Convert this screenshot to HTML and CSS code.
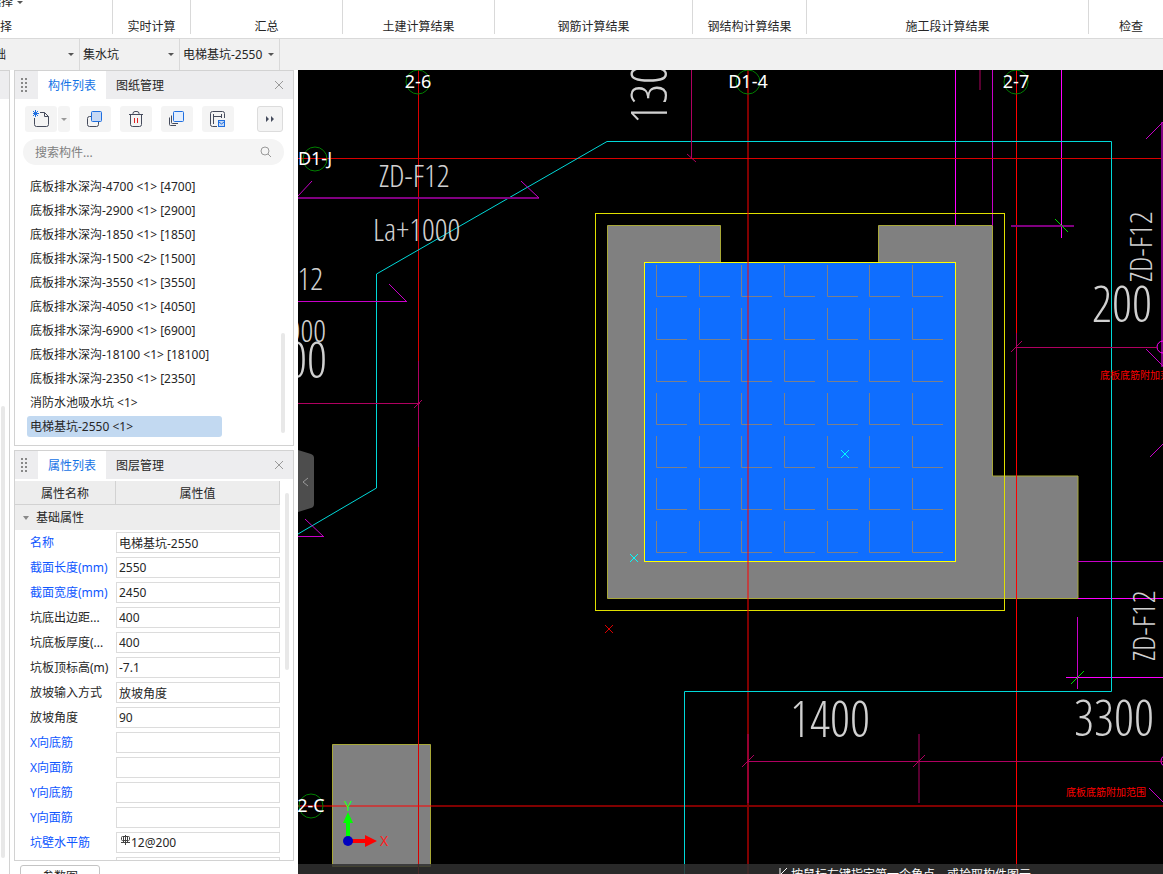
FILE: index.html
```html
<!DOCTYPE html>
<html lang="zh-CN">
  <head>
    <meta charset="UTF-8" />
    <meta name="viewport" content="width=device-width, initial-scale=1.0" />
    <title>集水坑 - 电梯基坑-2550</title>
    <link rel="stylesheet" href="styles.css">
  </head>
  <body>
    <header class="ribbon">
      <div class="group group-select"><button class="drop-btn">选择</button><span>选择</span></div>
      <div class="group group-live"><span>实时计算</span></div>
      <div class="group group-sum"><span>汇总</span></div>
      <div class="group group-sum"><span>土建计算结果</span></div>
      <div class="group group-rebar"><span>钢筋计算结果</span></div>
      <div class="group group-steel"><span>钢结构计算结果</span></div>
      <div class="group group-stage"><span>施工段计算结果</span></div>
      <div class="group group-check"><span>检查</span></div>
    </header>

    <nav class="selectors">
      <div class="selector"><select aria-label="构件大类"><option>基础</option></select></div>
      <div class="selector"><select aria-label="构件类型"><option>集水坑</option></select></div>
      <div class="selector"><select aria-label="构件"><option>电梯基坑-2550</option></select></div>
    </nav>

    <div class="workspace">
      <div class="nav-strip">
        <div class="strip-head"></div>
        <div class="strip-thumb"></div>
      </div>

      <aside class="sidebar">
        <section class="panel">
          <div class="tabs">
            <span class="grip"></span>
            <button class="tab active">构件列表</button>
            <button class="tab">图纸管理</button>
            <button class="close" aria-label="关闭">
              <svg width="10" height="10" viewBox="0 0 10 10"><path d="M1 1l8 8M9 1l-8 8" /></svg>
            </button>
          </div>
          <div class="toolbar">
            <div class="split">
              <button class="tool" aria-label="新建">
                <svg width="18" height="18" viewBox="0 0 18 18">
                  <path d="M8 2.500h4.500l4 4v8q0 2-2 2h-10q-2 0-2-2V8M12.500 2.500v4h4" />
                  <path class="blue" d="M1 1l5 5M6 1L1 6M3.500 0v7M1 3.500h6" />
                </svg>
              </button>
              <button class="tool tool-arrow" aria-label="更多新建"></button>
            </div>
            <button class="tool" aria-label="复制">
              <svg width="18" height="18" viewBox="0 0 18 18">
                <path d="M6 6.500H3.500q-2 0-2 2v6q0 2 2 2h7q2 0 2-2V12" />
                <rect class="blue fill-mid" x="5.500" y="1.500" width="10" height="10" rx="1" />
              </svg>
            </button>
            <button class="tool" aria-label="删除">
              <svg width="18" height="18" viewBox="0 0 18 18">
                <path d="M2 4.500h14M6 4V3.500q0-2 2-2h2q2 0 2 2V4M3.500 5v9.500q0 2 2 2h7q2 0 2-2V5" />
                <path class="red" d="M7.500 8v5M10.500 8v5" />
              </svg>
            </button>
            <button class="tool" aria-label="层间复制">
              <svg width="18" height="18" viewBox="0 0 18 18">
                <path d="M1.500 7.500v7q0 1 1 1H8M3.500 5.500v7q0 1 1 1H10" />
                <rect class="blue fill-light" x="5.500" y="1.500" width="10" height="10" rx="1" />
              </svg>
            </button>
            <button class="tool" aria-label="存档">
              <svg width="18" height="18" viewBox="0 0 18 18">
                <path d="M8 16.500H3.500q-2 0-2-2v-11q0-2 2-2h10q2 0 2 2V8M4.500 4v10M4.500 6.500h8M12.500 4v4" />
                <rect class="blue fill-mid" x="9.500" y="10.500" width="6" height="6" />
                <path class="blue" d="M10 12l2.500 2 2.500-2" />
              </svg>
            </button>
            <button class="tool tool-more" aria-label="更多">
              <svg width="10" height="8" viewBox="0 0 10 8"><path class="solid" d="M1 1l3 3-3 3zM6 1l3 3-3 3z" /></svg>
            </button>
          </div>
          <div class="search">
            <input type="text" placeholder="搜索构件..." aria-label="搜索构件" />
            <svg width="12" height="12" viewBox="0 0 12 12"><circle cx="5" cy="5" r="4" /><path d="M8 8l3 3" /></svg>
          </div>
          <div class="list-box">
            <ul class="components">
              <li>底板排水深沟-4700 &lt;1&gt; [4700]</li>
              <li>底板排水深沟-2900 &lt;1&gt; [2900]</li>
              <li>底板排水深沟-1850 &lt;1&gt; [1850]</li>
              <li>底板排水深沟-1500 &lt;2&gt; [1500]</li>
              <li>底板排水深沟-3550 &lt;1&gt; [3550]</li>
              <li>底板排水深沟-4050 &lt;1&gt; [4050]</li>
              <li>底板排水深沟-6900 &lt;1&gt; [6900]</li>
              <li>底板排水深沟-18100 &lt;1&gt; [18100]</li>
              <li>底板排水深沟-2350 &lt;1&gt; [2350]</li>
              <li>消防水池吸水坑 &lt;1&gt;</li>
              <li class="selected">电梯基坑-2550 &lt;1&gt;</li>
            </ul>
            <div class="list-thumb"></div>
          </div>
        </section>

        <section class="panel panel-props">
          <div class="tabs">
            <span class="grip"></span>
            <button class="tab active">属性列表</button>
            <button class="tab">图层管理</button>
            <button class="close" aria-label="关闭">
              <svg width="10" height="10" viewBox="0 0 10 10"><path d="M1 1l8 8M9 1l-8 8" /></svg>
            </button>
          </div>
          <div class="props-box">
            <table class="props">
              <thead>
                <tr><th class="name-col">属性名称</th><th>属性值</th></tr>
              </thead>
              <tbody>
                <tr class="section"><td colspan="2">基础属性</td></tr>
                <tr class="key"><td><label for="p1">名称</label></td><td><input id="p1" value="电梯基坑-2550" /></td></tr>
                <tr class="key"><td><label for="p2">截面长度(mm)</label></td><td><input id="p2" value="2550" /></td></tr>
                <tr class="key"><td><label for="p3">截面宽度(mm)</label></td><td><input id="p3" value="2450" /></td></tr>
                <tr><td><label for="p4">坑底出边距...</label></td><td><input id="p4" value="400" /></td></tr>
                <tr><td><label for="p5">坑底板厚度(...</label></td><td><input id="p5" value="400" /></td></tr>
                <tr><td><label for="p6">坑板顶标高(m)</label></td><td><input id="p6" value="-7.1" /></td></tr>
                <tr><td><label for="p7">放坡输入方式</label></td><td><input id="p7" value="放坡角度" /></td></tr>
                <tr><td><label for="p8">放坡角度</label></td><td><input id="p8" value="90" /></td></tr>
                <tr class="key"><td><label for="p9">X向底筋</label></td><td><input id="p9" /></td></tr>
                <tr class="key"><td><label for="p10">X向面筋</label></td><td><input id="p10" /></td></tr>
                <tr class="key"><td><label for="p11">Y向底筋</label></td><td><input id="p11" /></td></tr>
                <tr class="key"><td><label for="p12">Y向面筋</label></td><td><input id="p12" /></td></tr>
                <tr class="key">
                  <td><label for="p13">坑壁水平筋</label></td>
                  <td class="rebar">
                    <input id="p13" value="12@200" />
                    <svg width="10" height="10" viewBox="0 0 10 10"><path d="M2.500 1.500h6q1 0 1 1v2q0 1-1 1h-6q-1 0-1-1v-2q0-1 1-1M3.500 1v7M5.500 0v10M7.500 1v7M1 7.500h9" /></svg>
                  </td>
                </tr>
                <tr class="key"><td></td><td><input aria-label="坑壁垂直筋" /></td></tr>
              </tbody>
            </table>
            <div class="props-thumb"></div>
          </div>
        </section>

        <div class="side-footer"><button class="param-btn">参数图</button></div>
      </aside>

      <main class="viewport">
        <svg class="drawing" width="100%" height="100%">
          <defs>
            <pattern id="hatch" x="656" y="265" width="128" height="128" patternUnits="userSpaceOnUse">
              <path d="M.5 0v31.500H31M43.500 0v31.500H74M85.500 0v31.500H116
                       M.5 43v31.500H31M43.500 43v31.500H74M85.500 43v31.500H116
                       M.5 85v31.500H31M43.500 85v31.500H74M85.500 85v31.500H116" fill="none" stroke="#7d8088" />
            </pattern>
          </defs>
          <g transform="translate(-298 -70)">
            <!-- slabs -->
            <path class="slab" d="M607.500 225.500h113v37h158v-37h114v250.500h85.500v122.500h-470.500z" />
            <path class="slab" d="M332.500 744.500h98v122h-98z" />
            <path class="magenta" d="M955.500 70v155.500M1061.500 70v168M1078 598.500h85M1066 677.500h97" />
            <path class="magenta dim" d="M992.500 70v155.500M1078 561.500h85M1077.500 617v72" />
            <rect class="pit" x="644.500" y="262.500" width="311" height="299" />
            <rect x="656" y="265" width="288" height="288" fill="url(#hatch)" />
            <rect class="bound" x="595.500" y="213.500" width="409" height="397" />

            <!-- grid axes -->
            <path class="axis" d="M1016.500 70v804" />
            <path class="axis dim" d="M418.500 70v804M298 158.500h865" />
            <path class="axis wide" d="M748 70v804M298 806h865" />

            <!-- cushion outline -->
            <path class="outline" d="M298 534L376.500 488V274L607 141.500H1111.500V691.500H684.500V874" />

            <!-- leaders and dimension lines -->
            <path class="purple" d="M298 198h241M1011 226h63M1162 122v245" />
            <path class="magenta dim" d="M298 196l14-15M521 181l18 17M298 301.500h109M389 284l17 17M298 536.500h25M305 519l19 18
                     M1146 139l17-17M1146 349l17 17M1150 457l13-13M1149 788l14 14" />
            <circle class="magenta" cx="1163" cy="347" r="6" />
            <circle class="magenta" cx="1167" cy="761" r="6" />
            <path class="crimson" d="M691.500 70v89M687 154l9 8M298 403.500h122M414 408l8-8M418.500 361v86M1016 347.500h141
                     M1011 352l11-11M1016.500 333v57M748 761.500h415M742 767l12-12M913 767l12-12M748 734v69M919 734v69M980 70v20" />
            <path class="green" d="M1055 219l13 13M1071 684l13-13" />
            <path class="cyan" d="M841 450l8 8M849 450l-8 8M630 554l8 8M638 554l-8 8" />
            <path class="axis dim" d="M605 625l8 8M613 625l-8 8" />

            <!-- axis bubbles -->
            <g class="bubble">
              <circle cx="418" cy="82" r="12" />
              <circle cx="748" cy="82" r="12" />
              <circle cx="1016" cy="82" r="12" />
              <circle cx="315" cy="159" r="12" />
              <circle cx="311" cy="806" r="12" />
            </g>
            <g class="axis-name">
              <text x="418" y="88">2-6</text>
              <text x="748" y="88">D1-4</text>
              <text x="1016" y="88">2-7</text>
              <text x="315" y="165">D1-J</text>
              <text x="311" y="812">2-C</text>
            </g>

            <g class="note">
              <text x="379" y="187">ZD-F12</text>
              <text x="373" y="241">La+1000</text>
              <text class="end" x="323" y="290">ZD-F12</text>
              <text class="end" x="326" y="342">La+1000</text>
              <text transform="translate(1152 282) rotate(-90)">ZD-F12</text>
              <text transform="translate(1155 661) rotate(-90)">ZD-F12</text>
            </g>
            <g class="dim-text">
              <text transform="translate(667 124) rotate(-90)">1300</text>
              <text x="1092" y="322">200</text>
              <text class="end" x="327" y="378">00</text>
              <text x="790" y="737">1400</text>
              <text x="1074" y="736">3300</text>
            </g>
            <g class="range-text">
              <text x="1100" y="379">底板底筋附加范围</text>
              <text x="1066" y="796">底板底筋附加范围</text>
            </g>

            <!-- ucs icon -->
            <path d="M346 838v-15h-3l5-11 5 11h-3v15z" fill="#00ff00" />
            <path d="M351 839h14v-4l12 6-12 6v-4h-14z" fill="#ff0000" />
            <circle cx="348" cy="841" r="5" fill="#0000c0" />
            <text class="ucs-y" x="348" y="811">Y</text>
            <text class="ucs-x" x="384" y="846">X</text>
          </g>
        </svg>
        <button class="collapse" aria-label="收起">
          <svg width="16" height="62" viewBox="0 0 16 62"><path d="M0 0l13 4q3 1 3 4v46q0 3-3 4L0 62z" fill="#4d4d4d" /><path d="M10 28l-5 4 5 4" fill="none" stroke="#999" /></svg>
        </button>
        <div class="hint">
          <svg width="10" height="12" viewBox="0 0 10 12"><path d="M1 0v12M8 0L2 6l6 6" fill="none" stroke="#fff" /></svg>
          <span>按鼠标左键指定第一个角点，或拾取构件图元</span>
        </div>
      </main>
    </div>
  </body>
</html>
```
FILE: styles.css
```css
* {
  margin: 0;
  padding: 0;
  box-sizing: border-box;
}

body {
  display: flex;
  flex-direction: column;
  height: 100vh;
  overflow: hidden;
  background: #fff;
  color: #262626;
  font-family: 'Noto Sans', 'Noto Sans CJK SC', sans-serif;
  font-size: 12px;
  line-height: 18px;
}

button,
input,
select {
  font: inherit;
  color: inherit;
  border: none;
  background: none;
}

/* ribbon */
.ribbon {
  display: flex;
  flex: none;
  height: 39px;
  margin-left: -112px;
  padding-bottom: 4px;
  border-bottom: 1px solid #d9d9d9;
  line-height: 14px;
}

.group {
  display: flex;
  flex: none;
  flex-direction: column;
  align-items: center;
  justify-content: flex-end;
  border-right: 1px solid #d9d9d9;
}

.group-select {
  width: 225px;
}

.group-live {
  width: 78px;
}

.group-sum {
  width: 152px;
}

.group-rebar {
  width: 198px;
}

.group-steel {
  width: 114px;
}

.group-stage {
  width: 282px;
}

.group-check {
  width: 85px;
}

.drop-btn {
  display: flex;
  flex: none;
  align-items: center;
  gap: 4px;
  height: 24px;
  margin-bottom: 6px;
  padding-left: 12px;
}

.drop-btn::after,
.selector::after,
.tool-arrow::after {
  content: '';
  border: 3px solid transparent;
  border-top-color: #555;
  border-bottom: none;
}

/* component selectors */
.selectors {
  display: flex;
  flex: none;
  height: 31px;
  margin-left: -21px;
  background: #f1f1f1;
}

.selector {
  position: relative;
  width: 101px;
  border-right: 1px solid #d9d9d9;
}

.selector + .selector {
  width: 100px;
}

.selector::after {
  position: absolute;
  top: 14px;
  right: 5px;
  pointer-events: none;
}

.selector select {
  width: 100%;
  height: 100%;
  padding-left: 3px;
  appearance: none;
}

.workspace {
  display: flex;
  flex: 1;
  min-height: 0;
}

.nav-strip {
  flex: none;
  width: 10px;
  border-right: 1px solid #d2d2d2;
}

.strip-head {
  height: 29px;
  border-top: 1px solid #d2d2d2;
  background: #ededef;
}

.strip-thumb {
  width: 4px;
  height: 452px;
  margin: 307px 0 0 1px;
  border-radius: 2px;
  background: #e8e8e8;
}

/* panels */
.sidebar {
  display: flex;
  flex: none;
  flex-direction: column;
  gap: 4px;
  width: 288px;
  padding: 0 4px;
}

.panel {
  border: 1px solid #d2d2d2;
}

.panel-props {
  flex: 1;
  min-height: 0;
  overflow: hidden;
}

.tabs {
  display: flex;
  height: 28px;
  padding-left: 6px;
  background: #ededef;
}

.grip {
  width: 6px;
  height: 14px;
  margin: 7px 11px 0 0;
  background: conic-gradient(#888 25%, transparent 0) 2px 0 / 4px 4px;
}

.tab {
  padding: 2px 10px 0;
}

.tab.active {
  background: #fff;
  color: #1473e6;
}

.close {
  width: 28px;
  margin-left: auto;
  padding-top: 2px;
}

.close svg {
  fill: none;
  stroke: #999;
}

.toolbar {
  display: flex;
  gap: 9px;
  padding: 7px 10px;
}

.split {
  display: flex;
  gap: 1px;
}

.tool {
  display: flex;
  align-items: center;
  justify-content: center;
  width: 32px;
  height: 26px;
  border-radius: 3px;
  background: #f4f4f4;
}

.tool-arrow {
  width: 12px;
}

.tool-arrow::after {
  border-top-color: #999;
}

.tool-more {
  width: 26px;
  margin-left: auto;
  border: 1px solid #dcdcdc;
}

.tool svg {
  fill: none;
  stroke: #454b5c;
}

.tool .blue {
  stroke: #1f6fe0;
}

.tool .red {
  stroke: #e02020;
}

.tool .fill-mid {
  fill: #c5d8f5;
}

.tool .fill-light {
  fill: #e3eefd;
}

.tool .solid {
  fill: #454b5c;
  stroke: none;
}

.search {
  display: flex;
  align-items: center;
  height: 26px;
  margin: 0 9px 0 8px;
  padding: 0 12px;
  border-radius: 13px;
  background: #f4f4f4;
}

.search input {
  flex: 1;
  min-width: 0;
  padding-top: 2px;
}

.search input::placeholder {
  color: #808080;
}

.search svg {
  fill: none;
  stroke: #999;
}

.list-box {
  display: flex;
  align-items: flex-end;
  justify-content: space-between;
  padding: 11px 8px 5px 12px;
}

.components {
  width: 195px;
  list-style: none;
}

.components li {
  height: 21px;
  margin-bottom: 3px;
  padding-left: 3px;
  border-radius: 3px;
  line-height: 21px;
}

.components .selected {
  background: #c2d9f1;
}

.list-thumb {
  width: 4px;
  height: 100px;
  margin-bottom: 7px;
  border-radius: 2px;
  background: #e8e8e8;
}

/* property table */
.props-box {
  display: flex;
  justify-content: space-between;
  padding: 2px 4px 0 0;
}

.props {
  width: 265px;
  border-collapse: separate;
  border-spacing: 0;
  table-layout: fixed;
}

.props th {
  height: 24px;
  padding-top: 2px;
  border-right: 1px solid #d2d2d2;
  border-bottom: 1px solid #d2d2d2;
  background: #ededed;
  font-weight: normal;
}

.props .name-col {
  width: 101px;
}

.props td {
  height: 25px;
  white-space: nowrap;
}

.props td:first-child {
  padding-left: 15px;
}

.props .section td {
  padding-left: 8px;
  background: #ededed;
}

.section td::before {
  content: '';
  display: inline-block;
  margin-right: 7px;
  border: 3px solid transparent;
  border-top: 4px solid #888;
  border-bottom: none;
  vertical-align: middle;
}

.key label {
  color: #0f57ff;
}

.props input {
  display: block;
  width: 100%;
  height: 21px;
  padding: 0 2px;
  border: 1px solid #dcdcdc;
}

.rebar {
  position: relative;
}

.props .rebar input {
  padding-left: 14px;
}

.rebar svg {
  position: absolute;
  top: 5px;
  left: 4px;
  fill: none;
  stroke: #444;
}

.props-thumb {
  width: 4px;
  height: 177px;
  margin-top: 12px;
  border-radius: 2px;
  background: #e8e8e8;
}

.side-footer {
  flex: none;
  height: 9px;
  padding-left: 6px;
}

.param-btn {
  width: 80px;
  height: 24px;
  border: 1px solid #c4c4c4;
  border-radius: 3px;
}

/* drawing area */
.viewport {
  position: relative;
  flex: 1;
  min-width: 0;
  overflow: hidden;
  background: #000;
}

.drawing {
  display: block;
}

.drawing path,
.drawing circle {
  stroke-width: 1px;
}

.slab {
  fill: #808080;
  stroke: #a8a838;
}

.pit {
  fill: #0f6eff;
  stroke: #ffff00;
}

.bound {
  fill: none;
  stroke: #e0e000;
}

.axis {
  fill: none;
  stroke: #ff0000;
}

.axis.dim {
  stroke: #d80000;
}

.drawing .axis.wide {
  stroke: rgba(255, 0, 0, 0.5);
  stroke-width: 2px;
}

.outline {
  fill: none;
  stroke: #00d8d8;
}

.cyan {
  stroke: #00ffff;
}

.magenta {
  fill: none;
  stroke: #ff00ff;
}

.magenta.dim {
  stroke: #c800c8;
}

.drawing .purple {
  stroke: #800080;
  stroke-width: 2px;
}

.crimson {
  fill: none;
  stroke: #b00060;
}

.green {
  stroke: #00d800;
}

.bubble {
  fill: none;
  stroke: #008000;
}

.axis-name {
  fill: #fff;
  font-size: 18px;
  text-anchor: middle;
}

.note,
.dim-text {
  fill: #d0d0d0;
  font-family: 'Open Sans Condensed Light', 'Roboto', sans-serif;
  font-weight: 100;
}

.note {
  font-size: 32px;
}

.dim-text {
  font-size: 50px;
}

.end {
  text-anchor: end;
}

.range-text {
  fill: #ff0000;
  font-size: 10px;
}

.ucs-x,
.ucs-y {
  font-size: 14px;
  text-anchor: middle;
}

.ucs-x {
  fill: #ff2020;
}

.ucs-y {
  fill: #20ff20;
}

.collapse {
  position: absolute;
  top: 380px;
  left: 0;
  height: 62px;
}

.hint {
  position: absolute;
  right: 0;
  bottom: 0;
  left: 0;
  display: flex;
  justify-content: flex-end;
  gap: 2px;
  height: 10px;
  padding: 4px 132px 0 0;
  overflow: hidden;
  background: rgba(48, 48, 48, 0.85);
  color: #fff;
  line-height: 14px;
}

.hint svg {
  flex: none;
}
```
